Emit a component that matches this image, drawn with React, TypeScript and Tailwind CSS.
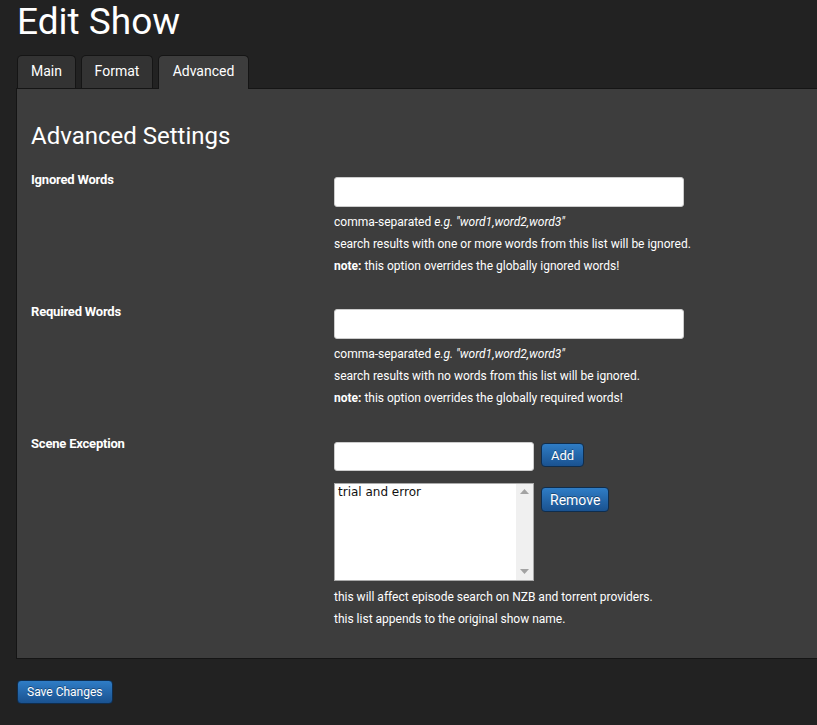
import React from "react";

const btn =
  "rounded-[4px] border border-[#0f2d4d] bg-gradient-to-b from-[#2f7dc6] to-[#1a5290] text-white leading-none [text-shadow:0_-1px_0_rgba(0,0,0,0.35)]";

function Help({ children }: { children: React.ReactNode }) {
  return <p className="text-[12px] leading-[22px] text-white">{children}</p>;
}

function Arrow({ up }: { up?: boolean }) {
  return (
    <svg width="9" height="5" viewBox="0 0 9 5">
      <path d={up ? "M4.5 0 L9 5 L0 5 Z" : "M0 0 L9 0 L4.5 5 Z"} fill="#a3a3a3" />
    </svg>
  );
}

const tabs = [
  { label: "Main", w: "w-[59px]" },
  { label: "Format", w: "w-[72px]" },
];

export default function App() {
  return (
    <div className="min-h-[725px] bg-[#222222] font-['Roboto',sans-serif] text-white">
      <div className="pl-[16px]">
        <h1 className="pl-[1px] pt-[1px] text-[37px] leading-[42px] font-normal">Edit Show</h1>

        {/* tabs */}
        <div className="mt-[12px] flex gap-[5px] pl-[1px]">
          {tabs.map((t) => (
            <div
              key={t.label}
              className={`${t.w} h-[33px] rounded-t-[5px] border border-b-0 border-[#151515] bg-[#333333] pt-[6px] text-center text-[14px] leading-[18px]`}
            >
              {t.label}
            </div>
          ))}
          <div className="relative z-10 h-[34px] w-[91px] rounded-t-[5px] border border-b-0 border-[#151515] bg-[#3d3d3d] pt-[6px] text-center text-[14px] leading-[18px]">
            Advanced
          </div>
        </div>

        {/* panel */}
        <div className="-mt-[1px] h-[571px] border border-r-0 border-[#151515] bg-[#3d3d3d] pl-[14px] pt-[32px]">
          <h2 className="text-[24px] leading-[30px] font-normal">Advanced Settings</h2>

          {/* Ignored words */}
          <div className="mt-[20px] flex">
            <div className="w-[303px] text-[13px] font-bold leading-[18px] tracking-[-0.2px]">Ignored Words</div>
            <div className="pt-[6px]">
              <div className="h-[30px] w-[350px] rounded-[3px] border border-[#cccccc] bg-white" />
              <div className="mt-[4px]">
                <Help>
                  comma-separated <i>e.g. "word1,word2,word3"</i>
                </Help>
                <Help>search results with one or more words from this list will be ignored.</Help>
                <Help>
                  <b>note:</b> this option overrides the globally ignored words!
                </Help>
              </div>
            </div>
          </div>

          {/* Required words */}
          <div className="mt-[26px] flex">
            <div className="w-[303px] text-[13px] font-bold leading-[18px] tracking-[-0.2px]">Required Words</div>
            <div className="pt-[6px]">
              <div className="h-[30px] w-[350px] rounded-[3px] border border-[#cccccc] bg-white" />
              <div className="mt-[4px]">
                <Help>
                  comma-separated <i>e.g. "word1,word2,word3"</i>
                </Help>
                <Help>search results with no words from this list will be ignored.</Help>
                <Help>
                  <b>note:</b> this option overrides the globally required words!
                </Help>
              </div>
            </div>
          </div>

          {/* Scene exception */}
          <div className="mt-[26px] flex">
            <div className="w-[303px] text-[13px] font-bold leading-[18px] tracking-[-0.2px]">Scene Exception</div>
            <div className="pt-[7px]">
              <div className="flex items-start gap-[7px]">
                <div className="h-[29px] w-[200px] rounded-[3px] border border-[#cccccc] bg-white" />
                <button className={`${btn} mt-[1px] h-[24px] px-[9px] text-[13px]`}>Add</button>
              </div>
              <div className="mt-[12px] flex items-start gap-[7px]">
                <div className="flex h-[98px] w-[200px] border border-[#aaaaaa] bg-white">
                  <div className="flex-1 px-[3px] pt-[0px] font-['DejaVu_Sans',sans-serif] text-[12px] leading-[16px] text-[#111111]">
                    trial and error
                  </div>
                  <div className="flex w-[17px] flex-col items-center justify-between bg-[#f0f0f0] pt-[5px] pb-[6px]">
                    <Arrow up />
                    <Arrow />
                  </div>
                </div>
                <button className={`${btn} mt-[4px] h-[25px] px-[8px] text-[14px]`}>Remove</button>
              </div>
              <div className="mt-[5px]">
                <Help>this will affect episode search on NZB and torrent providers.</Help>
                <Help>this list appends to the original show name.</Help>
              </div>
            </div>
          </div>
        </div>

        <div className="pt-[20px] pl-[1px]">
          <button className={`${btn} h-[24px] px-[9px] text-[12px]`}>Save Changes</button>
        </div>
      </div>
    </div>
  );
}
